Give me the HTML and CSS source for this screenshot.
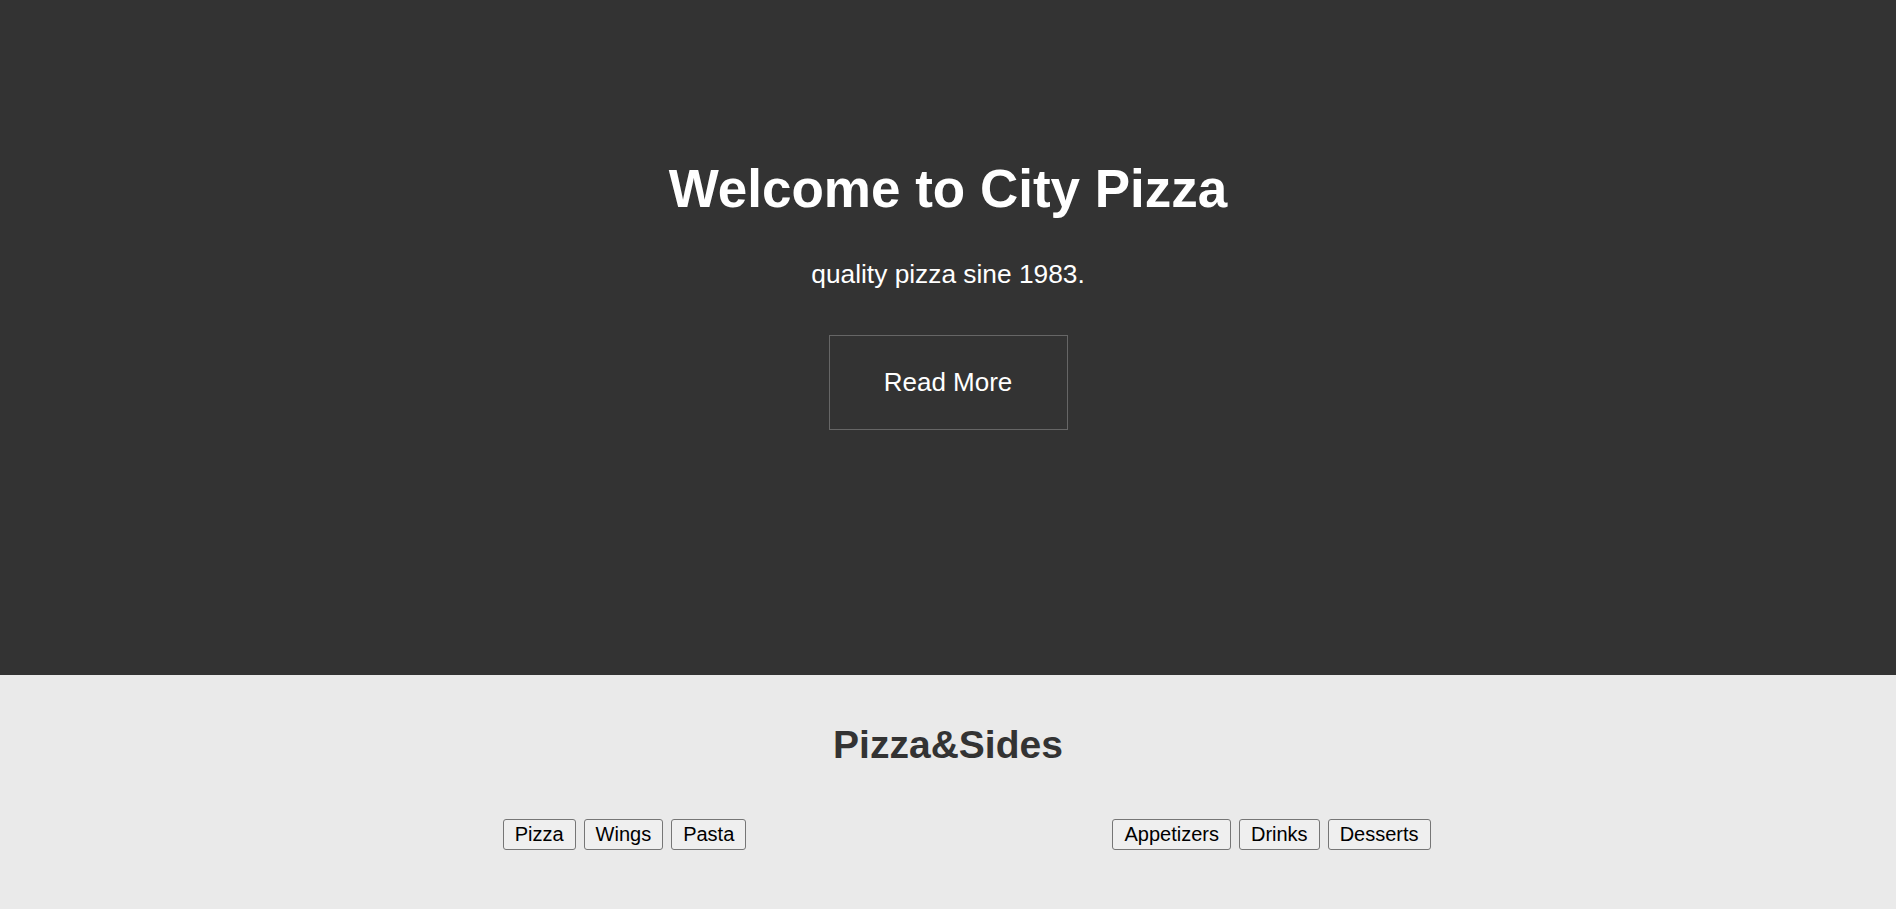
FILE: index.html
```html
<!DOCTYPE html>
<html lang="en">
<head>
<meta charset="utf-8">
<title>City Pizza</title>
<link rel="stylesheet" href="styles.css">
</head>
<body>
<header class="hero">
  <h1 class="hero-title">Welcome to City Pizza</h1>
  <p class="hero-sub">quality pizza sine 1983.</p>
  <a class="hero-btn" href="#">Read More</a>
</header>
<section class="menu">
  <h2 class="menu-title">Pizza&amp;Sides</h2>
  <div class="menu-cols">
    <div class="btn-group">
      <button class="tab">Pizza</button>
      <button class="tab">Wings</button>
      <button class="tab">Pasta</button>
    </div>
    <div class="btn-group">
      <button class="tab">Appetizers</button>
      <button class="tab">Drinks</button>
      <button class="tab">Desserts</button>
    </div>
  </div>
</section>
</body>
</html>
```
FILE: styles.css
```css
* { box-sizing: border-box; }
html, body { margin: 0; padding: 0; }
body {
  font-family: "Liberation Sans", Arial, sans-serif;
  background: #eaeaea;
  color: #333;
}
.hero {
  background: #333333;
  color: #fff;
  height: 675px;
  padding-top: 159px;
  display: flex;
  flex-direction: column;
  align-items: center;
}
.hero-title {
  margin: 0;
  font-size: 53px;
  line-height: 60px;
  font-weight: bold;
}
.hero-sub {
  margin: 40px 0 0;
  font-size: 26.3px;
  line-height: 30px;
}
.hero-btn {
  margin-top: 46px;
  display: block;
  width: 239px;
  height: 95px;
  border: 1px solid #666;
  color: #fff;
  text-decoration: none;
  font-size: 26px;
  line-height: 93px;
  text-align: center;
}
.menu {
  padding-top: 47px;
  padding-bottom: 59px;
}
.menu-title {
  margin: 0;
  text-align: center;
  font-size: 39px;
  line-height: 45px;
  font-weight: bold;
  color: #333;
}
.menu-cols {
  margin: 52px auto 0;
  width: 1294px;
  display: grid;
  grid-template-columns: 1fr 1fr;
}
.btn-group {
  display: flex;
  justify-content: center;
  gap: 8px;
}
.tab {
  font-family: "Liberation Sans", Arial, sans-serif;
  font-size: 20px;
  line-height: 23px;
  padding: 3px 11px;
  border: 1px solid #767676;
  border-radius: 3px;
  background: #efefef;
  color: #000;
}
```
